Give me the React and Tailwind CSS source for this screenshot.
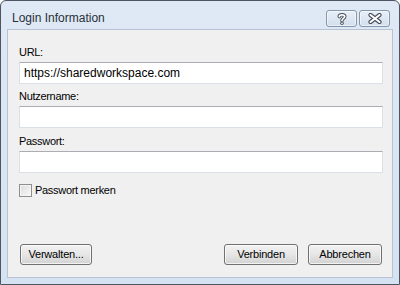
const font = { fontFamily: '"Liberation Sans", Arial, sans-serif' };

const TitleButton = ({ children }) => (
  <div className="w-[31px] h-[17px] rounded-[3px] border border-[#8796ad] bg-gradient-to-b from-[#e8eff8] to-[#d3dfee] flex items-center justify-center shadow-[inset_0_0_0_1px_rgba(255,255,255,0.5)]">
    {children}
  </div>
);

const Field = ({ label, value, className = '' }) => (
  <div className={className}>
    <div className="h-[15px] leading-[15px] text-[11px] tracking-[-0.3px] text-black mb-[2px]">{label}</div>
    <div className="h-[22px] border border-[#dbdfe6] border-t-[#abadb3] bg-white flex items-center px-[4px] text-[12px] text-black">
      {value}
    </div>
  </div>
);

const Button = ({ children, className = '' }) => (
  <button className={`h-[21px] rounded-[3px] border border-[#707070] bg-gradient-to-b from-[#f2f2f2] via-[#e6e6e6] to-[#d2d2d2] text-[11px] tracking-[-0.2px] text-black leading-none shadow-[inset_0_0_0_1px_rgba(255,255,255,0.7)] ${className}`}>
    {children}
  </button>
);

export default function App() {
  return (
    <div style={font} className="w-[400px] h-[285px] bg-white">
      <div className="w-[400px] h-[285px] border border-[#4e5560] rounded-t-[6px] bg-gradient-to-b from-[#dfe9f5] to-[#d5e2f1] flex flex-col">
        {/* title bar */}
        <div className="h-[28px] flex items-start pl-[11px] pr-[9px]">
          <div className="flex-1 text-[12px] leading-[15px] text-[#2a2f38] mt-[10px]">Login Information</div>
          <div className="flex gap-[2px] mt-[9px]">
            <TitleButton>
              <svg width="10" height="12" viewBox="0 0 10 12">
                <path d="M2.3 3.6 C2.3 1.2 7.7 1.2 7.7 3.6 C7.7 5.4 5 5.4 5 7.6" fill="none" stroke="#444c58" strokeWidth="3.6" strokeLinecap="round" />
                <circle cx="5" cy="10.3" r="1.7" fill="#444c58" />
                <path d="M2.3 3.6 C2.3 1.2 7.7 1.2 7.7 3.6 C7.7 5.4 5 5.4 5 7.6" fill="none" stroke="#fff" strokeWidth="1.7" strokeLinecap="round" />
                <circle cx="5" cy="10.3" r="0.85" fill="#fff" />
              </svg>
            </TitleButton>
            <TitleButton>
              <svg width="14" height="11" viewBox="0 0 14 11">
                <path d="M2.5 2 L11.5 9 M11.5 2 L2.5 9" stroke="#444c58" strokeWidth="4.2" strokeLinecap="round" />
                <path d="M2.5 2 L11.5 9 M11.5 2 L2.5 9" stroke="#fff" strokeWidth="2.1" strokeLinecap="round" />
              </svg>
            </TitleButton>
          </div>
        </div>

        {/* body */}
        <div className="flex-1 mx-[6px] mb-[6px] border border-[#b5c3d5] bg-[#f0f0f0] flex flex-col pt-[15px] pl-[11px] pr-[9px] pb-[12px]">
          <Field label="URL:" value="https://sharedworkspace.com" />
          <Field label="Nutzername:" value="" className="mt-[5px]" />
          <Field label="Passwort:" value="" className="mt-[6px]" />
          <div className="mt-[9px] flex items-center gap-[3px] text-[11px] tracking-[-0.3px] text-black">
            <div className="w-[13px] h-[13px] border border-[#8e8f8f] bg-gradient-to-br from-[#dcdcdc] to-[#f8f8f8] shadow-[inset_0_0_0_1px_#f4f4f4]" />
            <span>Passwort merken</span>
          </div>
          <div className="flex-1" />
          <div className="flex items-center pl-[1px] pr-[1px]">
            <Button className="w-[72px]">Verwalten...</Button>
            <div className="flex-1" />
            <Button className="w-[74px]">Verbinden</Button>
            <Button className="w-[74px] ml-[10px]">Abbrechen</Button>
          </div>
        </div>
      </div>
    </div>
  );
}
